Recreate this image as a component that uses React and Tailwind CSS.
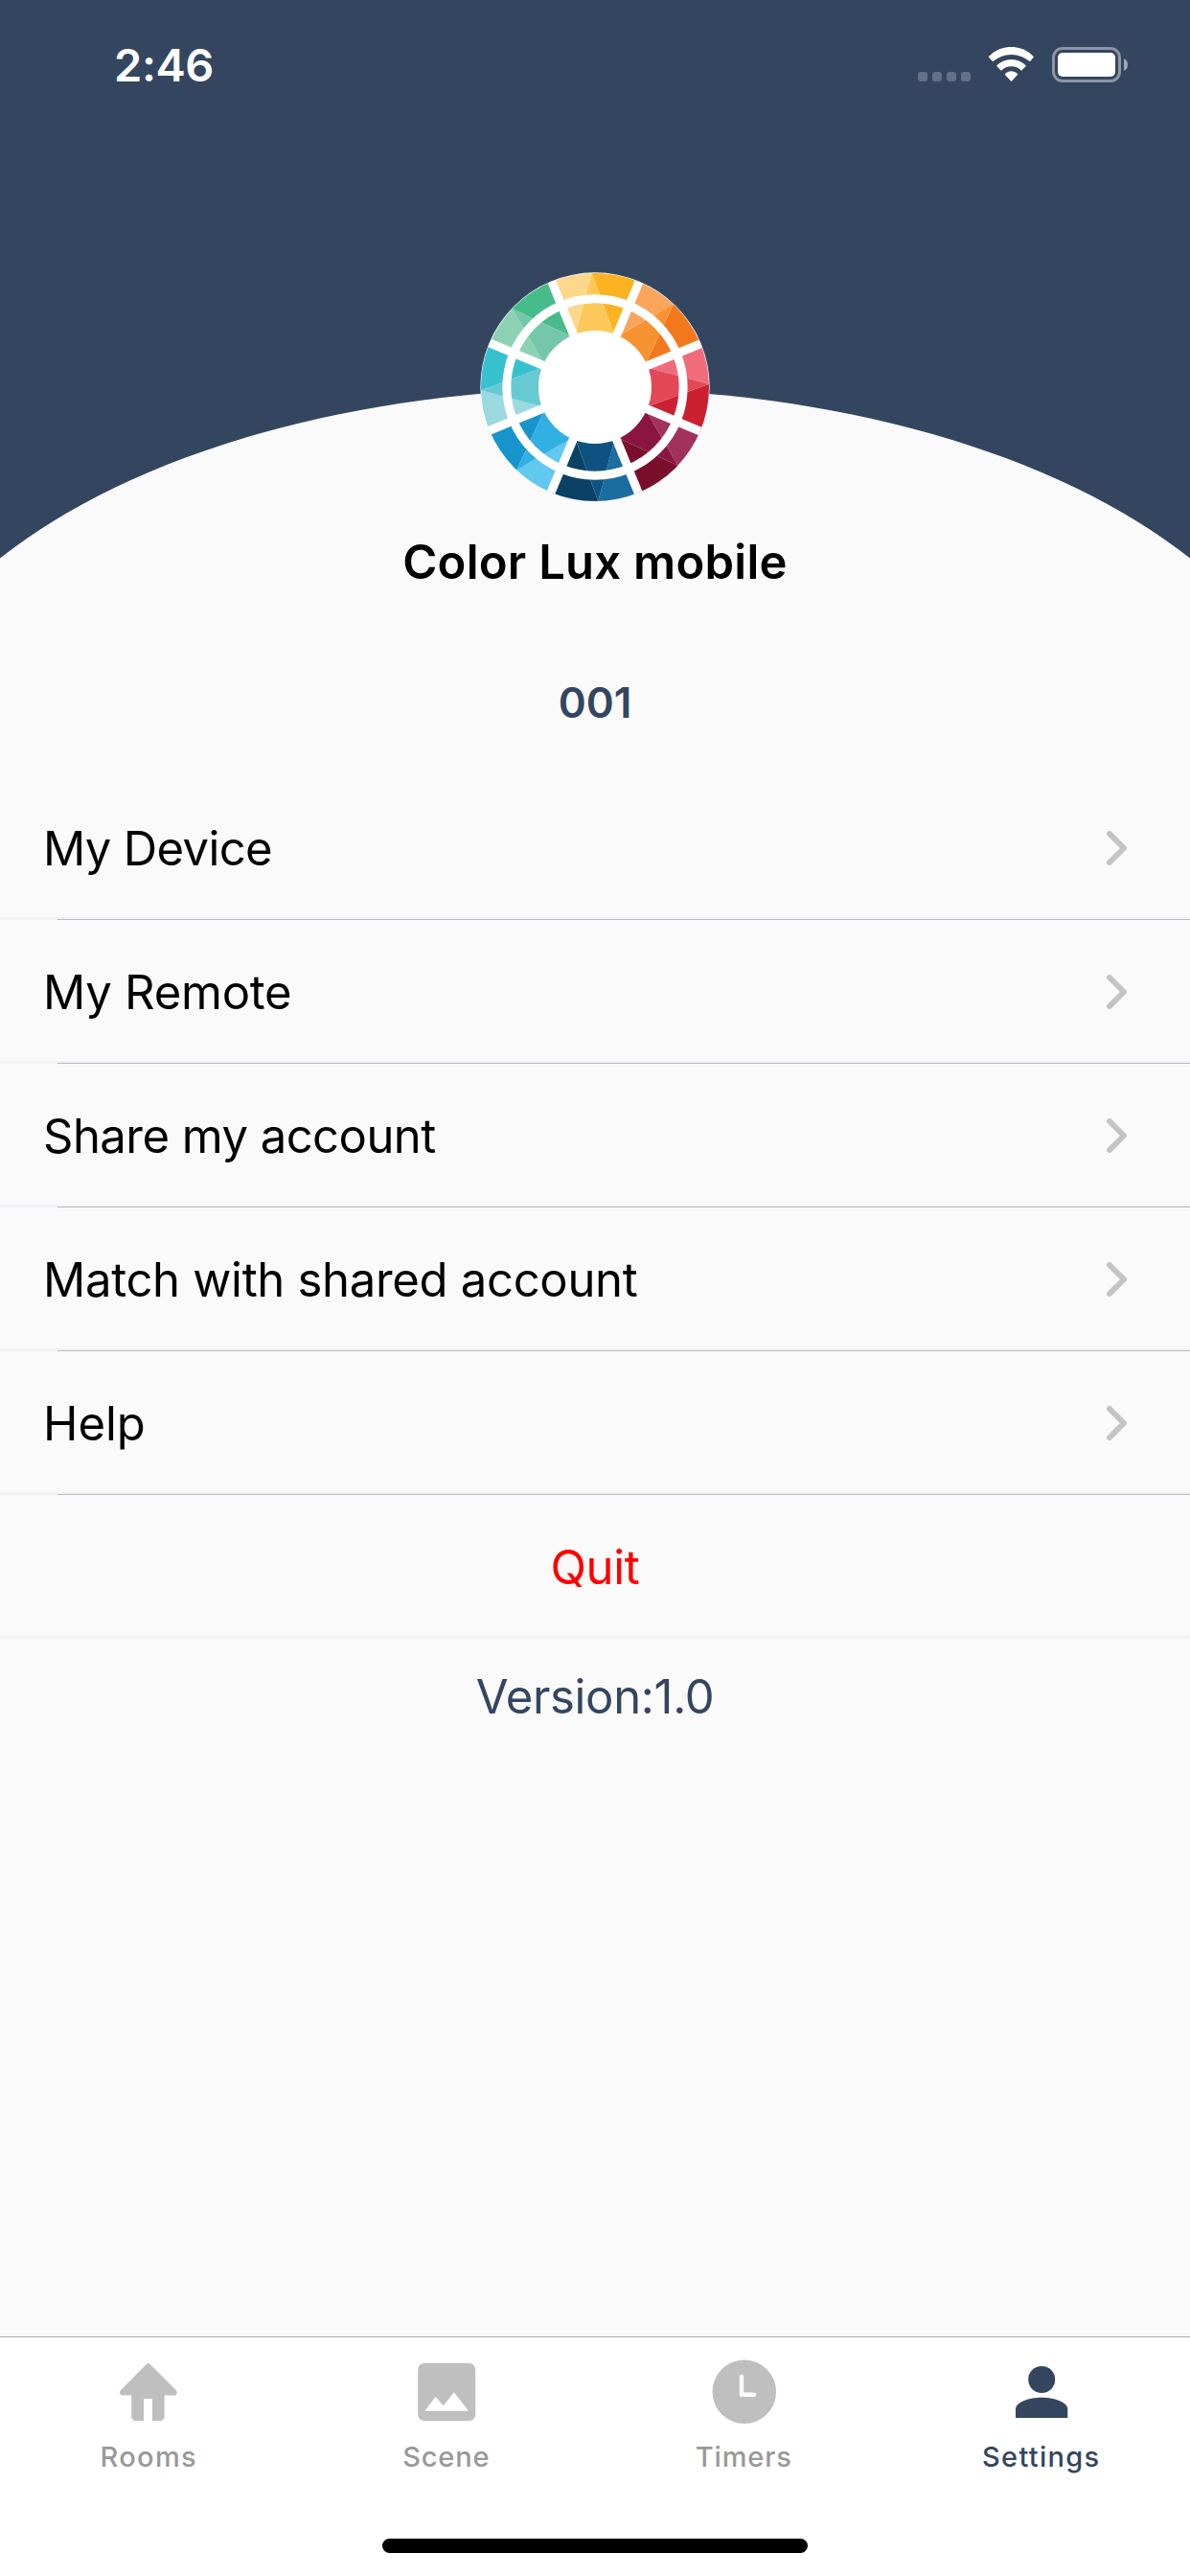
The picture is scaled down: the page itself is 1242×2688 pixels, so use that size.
import { useState } from 'react';

// clockwise from the top, each one as [light, mid, dark]
const WHEEL_COLORS = [
  ['#fdd88c', '#fdc85a', '#fcb322'],
  ['#f9a55b', '#f79232', '#f4781e'],
  ['#f16c7b', '#e34856', '#cb2030'],
  ['#a1335b', '#8a1640', '#7a0e2d'],
  ['#1c6d9f', '#0e5281', '#0a4164'],
  ['#61c8ef', '#32b0e4', '#1894cd'],
  ['#9bd9e1', '#67cad3', '#37c1cf'],
  ['#8dd1b4', '#74c8a9', '#47bc8b'],
];

const MENU_ITEMS = [
  { label: 'My Device', tracking: 'tracking-[-0.65px]' },
  { label: 'My Remote', tracking: 'tracking-[-0.25px]' },
  { label: 'Share my account', tracking: 'tracking-[-0.53px]' },
  { label: 'Match with shared account', tracking: 'tracking-[-0.3px]' },
  { label: 'Help', tracking: 'tracking-normal' },
];

const TABS = [
  { label: 'Rooms', icon: HomeIcon, tracking: 'tracking-[1.3px]' },
  { label: 'Scene', icon: SceneIcon, tracking: 'tracking-[0.8px]' },
  { label: 'Timers', icon: ClockIcon, tracking: 'tracking-[0.85px]' },
  { label: 'Settings', icon: PersonIcon, tracking: 'tracking-[1.28px]' },
];

function HomeIcon() {
  return (
    <svg className="size-[72px]" viewBox="0 0 72 72" fill="currentColor">
      <path d="M34.2 6.6Q35.7 5.4 37.2 6.6L65.2 34.6Q66.6 37 64.2 39.6H52.6V63L50 66H40V43H31V66H21L18.2 63V39.6H8.4Q5 38 6.4 34.8Z" />
    </svg>
  );
}

function SceneIcon() {
  return (
    <svg className="size-[72px]" viewBox="0 0 72 72">
      <rect x="6.2" y="6" width="60" height="60" rx="6.5" fill="currentColor" />
      <path d="M13.4 55.7L24.5 41L32.8 50.3L43.9 36.3L59 55.7Z" fill="#fff" />
    </svg>
  );
}

function ClockIcon() {
  return (
    <svg className="size-[72px]" viewBox="0 0 72 72">
      <circle cx="36.8" cy="35.8" r="33.3" fill="currentColor" />
      <path d="M34 20V38.8H47" fill="none" stroke="#fff" strokeWidth="4.4" strokeLinecap="round" strokeLinejoin="round" />
    </svg>
  );
}

function PersonIcon() {
  return (
    <svg className="size-[72px]" viewBox="0 0 72 72" fill="currentColor">
      <circle cx="36.2" cy="23" r="14" />
      <path d="M9 63V54C9 46 24 41.7 36.2 41.7S63.3 46 63.3 54V63Z" />
    </svg>
  );
}

function ColorWheel() {
  return (
    <svg className="size-60" viewBox="-360 -360 720 720">
      <defs>
        <clipPath id="wheel">
          <circle r="357" />
        </clipPath>
      </defs>
      <circle r="359" fill="#fff" />
      <g clipPath="url(#wheel)">
        {WHEEL_COLORS.map(([light, mid, dark], i) => (
          <g key={mid} transform={`rotate(${i * 45})`}>
            <path d="M0 0L-166 -400H-10V-357L-60 -169Z" fill={light} />
            <path d="M0 0L166 -400H-10V-357L59 -169Z" fill={dark} />
            <path d="M0 0L-60 -169L-10 -357L59 -169Z" fill={mid} />
          </g>
        ))}
        <circle r="276.5" fill="none" stroke="#fff" strokeWidth="27" />
        {WHEEL_COLORS.map(([, mid], i) => (
          <path key={mid} d="M0 0V-400" stroke="#fff" strokeWidth="27" transform={`rotate(${i * 45 + 22.7})`} />
        ))}
        <circle r="177" fill="#fff" />
      </g>
    </svg>
  );
}

function StatusBar() {
  return (
    <div className="flex h-[132px] items-start justify-between pl-[119px] pr-[65px] pt-[38px] text-white">
      <span className="text-[47px] font-semibold leading-[60px] tracking-[-0.4px]">2:46</span>
      <div className="mt-[11px] flex h-[37px]">
        <div className="mr-[18px] flex items-end gap-[5px] pb-px">
          {[0, 1, 2, 3].map((dot) => (
            <span key={dot} className="size-[10px] rounded-[3px] bg-[#637188]" />
          ))}
        </div>
        <svg className="mr-[19px] h-[37px] w-[48px]" viewBox="333 87 144 111" fill="currentColor">
          <path d="M335 118A96 96 0 0 1 477 118L465 133A89 89 0 0 0 348 133Z" />
          <path d="M360 146A64 64 0 0 1 453 146L438 161A44 44 0 0 0 375 161Z" />
          <path d="M386 173A26 26 0 0 1 427 173L406.5 195Z" />
        </svg>
        <div className="flex h-[37px] w-[72px] rounded-[11px] border-3 border-[#8c96a5] p-[3px]">
          <div className="flex-1 rounded-[5px] bg-white" />
        </div>
        <svg className="ml-[3px] mt-[12px] h-[13px] w-[4px]" viewBox="0 0 4 13" fill="#a0a8b4">
          <path d="M0 0Q4 2 4 6.5T0 13Z" />
        </svg>
      </div>
    </div>
  );
}

function MenuRow({ label, tracking }) {
  return (
    <button className="flex h-[150px] w-full flex-col text-left">
      <span className="flex w-full flex-1 items-center justify-between pl-[45px] pr-[66px] pt-[3px]">
        <span className={`mt-[2px] text-[49px] leading-[60px] text-black ${tracking}`}>{label}</span>
        <svg className="h-[36px] w-[21px]" viewBox="0 0 21 36" fill="none" stroke="#c4c4c6" strokeWidth="6" strokeLinecap="round" strokeLinejoin="round">
          <path d="M3 3L18 18L3 33" />
        </svg>
      </span>
      <span className="flex h-[3px] w-full items-end bg-[#f2f1f6] pl-[60px]">
        <span className="h-px flex-1 bg-[#bbbac1]" />
      </span>
    </button>
  );
}

function App() {
  const [activeTab, setActiveTab] = useState('Settings');

  return (
    <div className="flex h-[2688px] w-[1242px] flex-col overflow-hidden bg-[#fafafa] font-['Inter','Liberation_Sans',sans-serif]">
      <header className="relative h-[810px]">
        <svg className="absolute inset-0 h-[810px] w-full" viewBox="0 0 1242 810">
          <path d="M0 0H1242V582.5A750 402 0 0 0 0 582.5Z" fill="#34465f" />
        </svg>
        <div className="relative">
          <StatusBar />
          <div className="flex flex-col items-center pt-[152px]">
            <ColorWheel />
            <h1 className="mt-[33px] text-[49px] font-semibold leading-[60px] tracking-[0.25px] text-black">Color Lux mobile</h1>
            <p className="mt-[89px] text-[44px] font-semibold leading-[54px] text-[#34465f]">001</p>
          </div>
        </div>
      </header>

      <main className="flex-1">
        {MENU_ITEMS.map((item) => (
          <MenuRow key={item.label} {...item} />
        ))}
        <button className="flex h-[150px] w-full items-center justify-center border-b-3 border-[#f2f1f6] pt-[5px] text-[49px] leading-[60px] tracking-[-0.3px] text-[#ff0000]">
          Quit
        </button>
        <p className="pt-[31px] text-center text-[49px] leading-[60px] tracking-[-0.33px] text-[#34465f]">Version:1.0</p>
      </main>

      <footer className="flex h-[250px] flex-col items-center border-t border-[#adadaf] bg-white">
        <nav className="grid w-full grid-cols-4 pt-[21px]">
          {TABS.map(({ label, icon: Icon, tracking }) => (
            <button
              key={label}
              onClick={() => setActiveTab(label)}
              className={`flex flex-col items-center ${activeTab === label ? 'text-[#34465f]' : 'text-[#bfbfbf]'}`}
            >
              <Icon />
              <span className={`mt-[14px] text-[29px] font-medium leading-[35px] ${tracking} ${activeTab === label ? 'text-[#34465f]' : 'text-[#999999]'}`}>
                {label}
              </span>
            </button>
          ))}
        </nav>
        <div className="mt-[68px] h-[15px] w-[444px] rounded-full bg-black" />
      </footer>
    </div>
  );
}

export default App;
